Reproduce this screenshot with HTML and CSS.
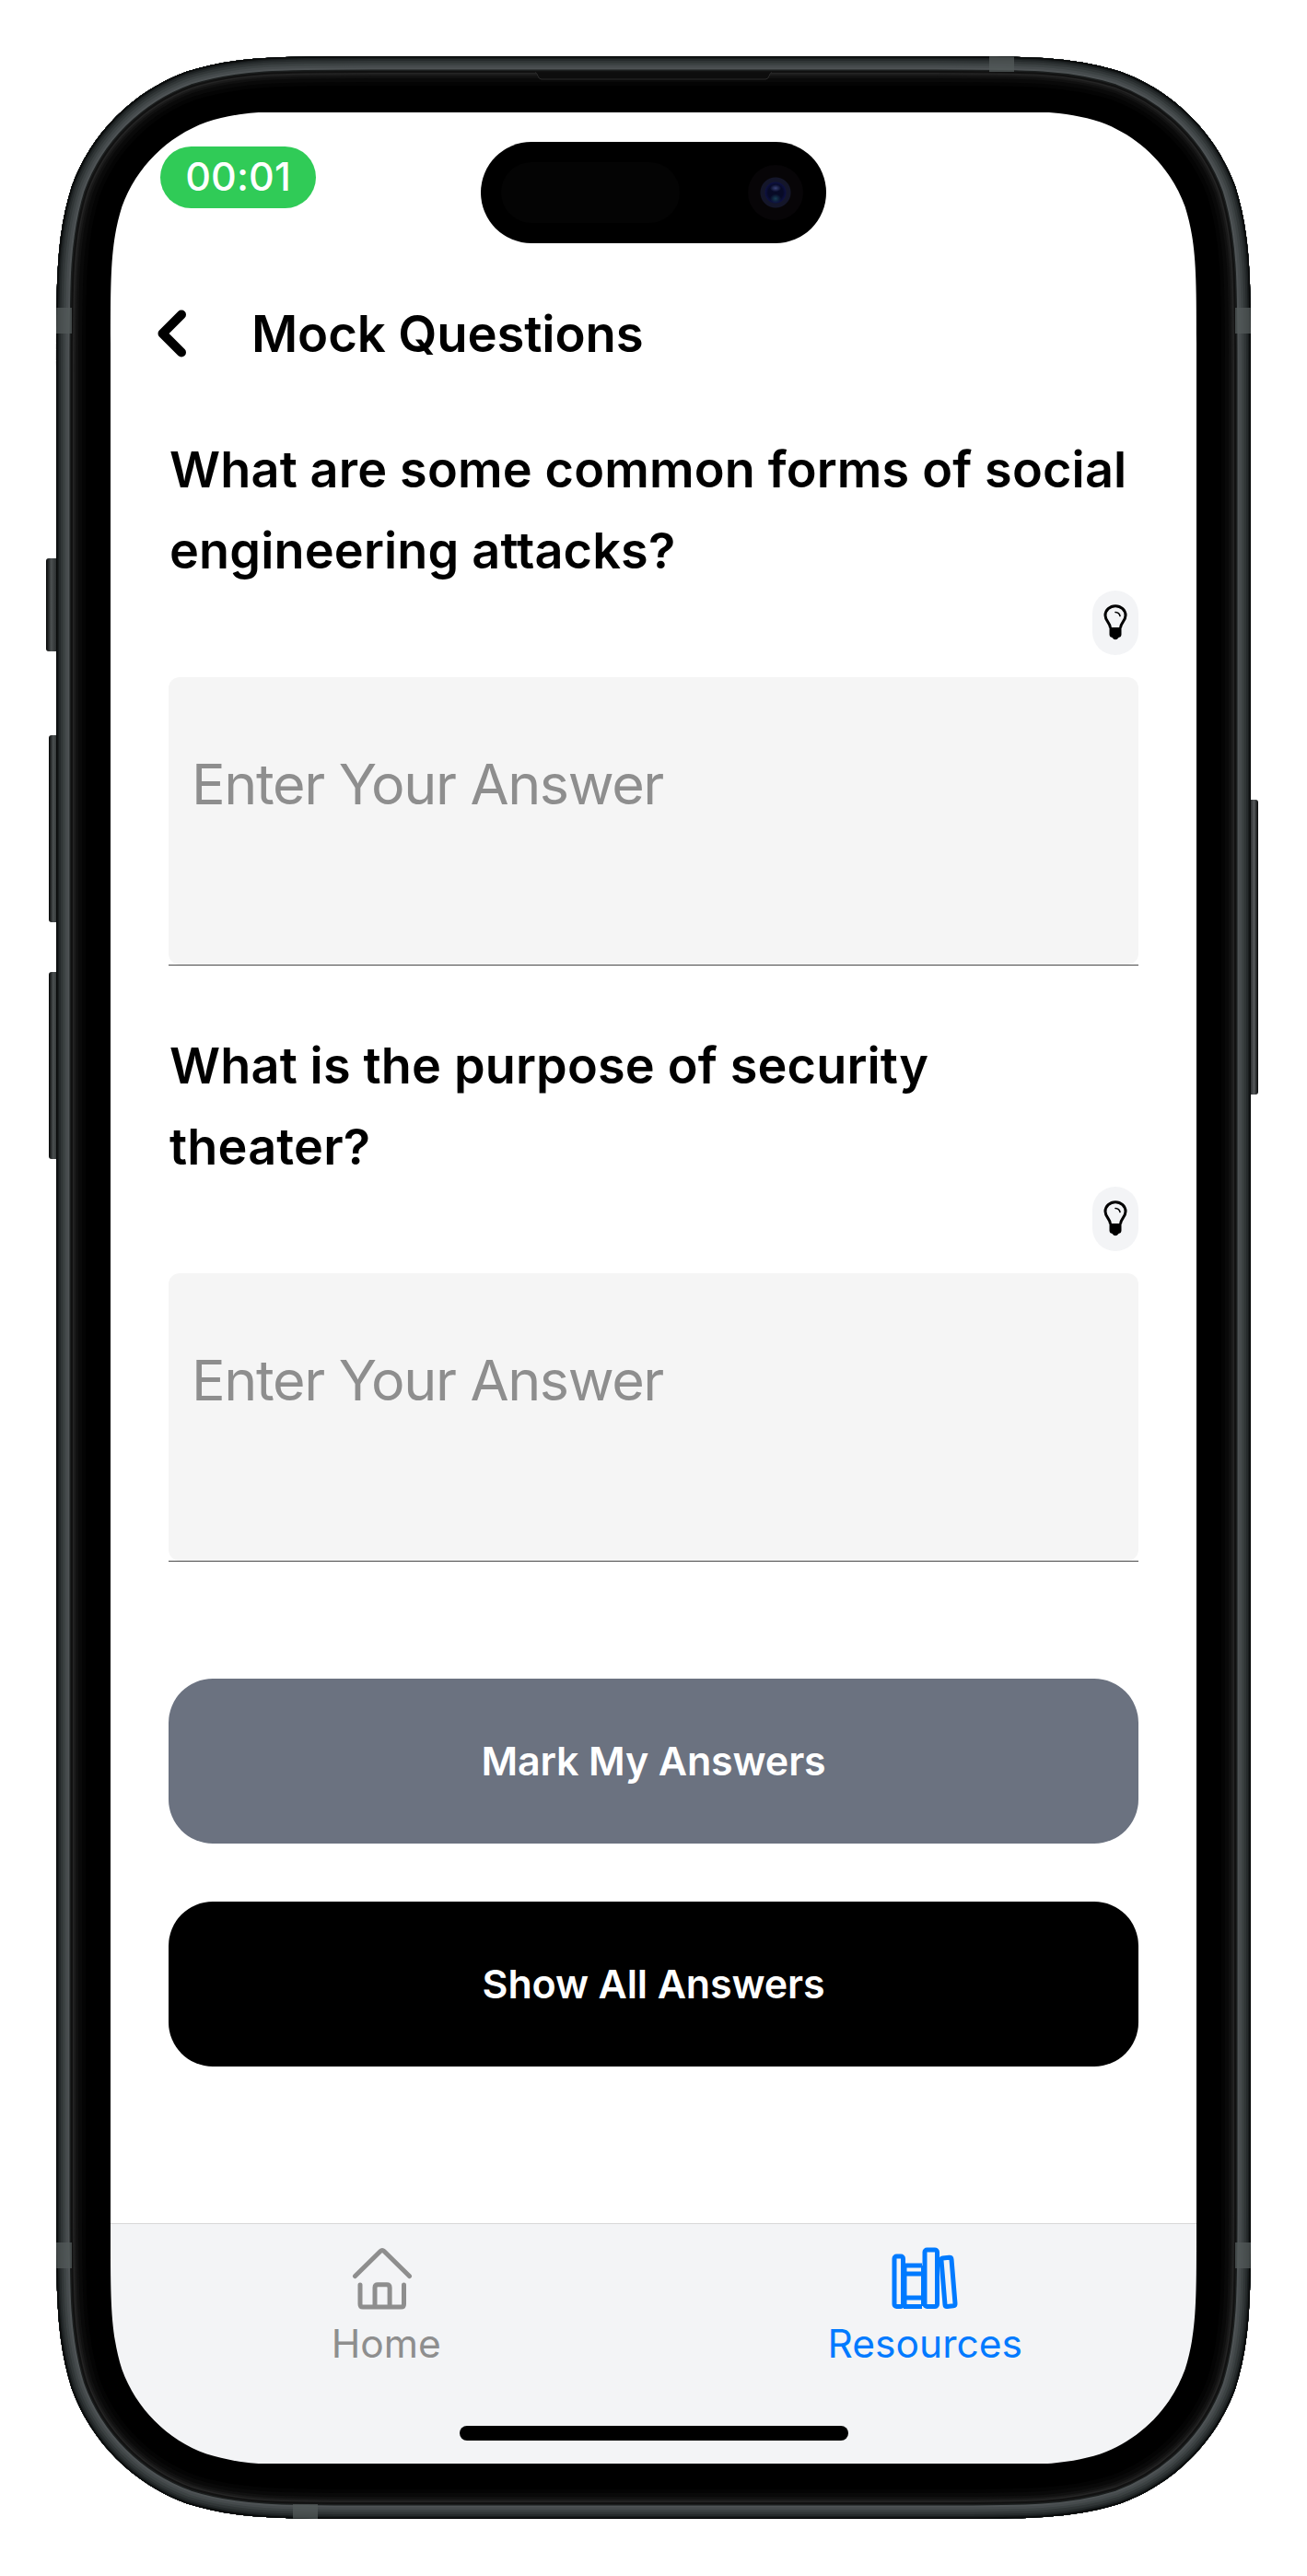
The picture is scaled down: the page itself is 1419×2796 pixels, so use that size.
FILE: index.html
```html
<!DOCTYPE html>
<html lang="en">
<head>
<meta charset="utf-8">
<title>Mock Questions</title>
<link rel="stylesheet" href="styles.css">
</head>
<body>
<main class="stage">
  <div class="screen">
    <div class="status"><span class="timer">00:01</span></div>
    <header class="header">
      <svg class="back" viewBox="0 0 32 52" fill="none" stroke="#000" stroke-width="10" stroke-linecap="round" stroke-linejoin="round"><path d="M26 5.500 5.500 26 26 46.500"/></svg>
      <h1 class="title">Mock Questions</h1>
    </header>
    <section class="question">
      <h2 class="prompt">What are some common forms of social<br>engineering attacks?</h2>
      <button class="hint" aria-label="Hint"><svg viewBox="0 0 26 40"><path d="M7.500 25.500C7.500 20 2 18 2 12a11 10.300 0 0 1 22 0c0 6-5.500 8-5.500 13.500" fill="none" stroke="#000" stroke-width="3"/><path d="M6.500 25h13v7.500q0 3-3 3.500-1.500 2.300-3.500 2.300T9.500 36q-3-.5-3-3.500z"/><path d="M13 8.500q4.200.2 5 4" fill="none" stroke="#000" stroke-width="1.600" stroke-linecap="round"/></svg></button>
      <div class="answer"><div class="field">Enter Your Answer</div></div>
    </section>
    <section class="question">
      <h2 class="prompt">What is the purpose of security<br>theater?</h2>
      <button class="hint" aria-label="Hint"><svg viewBox="0 0 26 40"><path d="M7.500 25.500C7.500 20 2 18 2 12a11 10.300 0 0 1 22 0c0 6-5.500 8-5.500 13.500" fill="none" stroke="#000" stroke-width="3"/><path d="M6.500 25h13v7.500q0 3-3 3.500-1.500 2.300-3.500 2.300T9.500 36q-3-.5-3-3.500z"/><path d="M13 8.500q4.200.2 5 4" fill="none" stroke="#000" stroke-width="1.600" stroke-linecap="round"/></svg></button>
      <div class="answer"><div class="field">Enter Your Answer</div></div>
    </section>
    <div class="actions">
      <button class="action mark">Mark My Answers</button>
      <button class="action show">Show All Answers</button>
    </div>
    <nav class="tabs">
      <a class="tab home">
        <svg class="icon" viewBox="0 0 66 68" fill="none" stroke="currentColor" stroke-width="5" stroke-linecap="round" stroke-linejoin="round"><path d="M3.500 31.500 31 4.500Q33 2.500 35 4.500L62.500 31.500M9 41v21q0 3 3 3h41.500q3 0 3-3V41M25 64V44q0-3.300 3.300-3.300h9.500q3.300 0 3.300 3.300v20"/></svg>
        <span>Home</span>
      </a>
      <a class="tab resources">
        <svg class="icon books" viewBox="0 0 72 68" fill="none" stroke="currentColor" stroke-width="5" stroke-linejoin="round"><rect x="3" y="10" width="9.500" height="54.500" rx="2.500"/><path d="M13 20h20M13 29h20M13 55h20M13 64.500h20"/><path d="M14.500 20v44M34 20v44" stroke-width="4"/><rect x="36" y="3" width="13.500" height="61.500" rx="2.500"/><path d="M55.500 12l7-.7q2.300-.2 2.500 2l4 48q.2 2.300-2 2.500l-6.500.6q-2.300.2-2.500-2l-4-48q-.2-2.200 1.500-2.400z"/></svg>
        <span>Resources</span>
      </a>
    </nav>
    <div class="indicator"></div>
    <div class="island"><i class="sensor"></i><i class="lens"></i></div>
  </div>
  <svg class="frame" viewBox="0 0 1419 2796">
    <defs>
      <path id="outline" d="M403.500 61h612c98.600 0 147.900 0 201 16.800c57.900 21.100 103.600 66.700 124.700 124.700c16.800 53.100 16.800 102.400 16.800 201v1988c0 98.600 0 147.900-16.800 201c-21.100 57.900-66.700 103.600-124.700 124.700c-53.100 16.800-102.400 16.800-201 16.800h-612c-98.600 0-147.900 0-201-16.800c-57.900-21.100-103.600-66.700-124.700-124.700c-16.800-53.100-16.800-102.400-16.800-201v-1988c0-98.600 0-147.900 16.800-201c21.100-57.900 66.700-103.600 124.700-124.700c53.100-16.800 102.400-16.800 201-16.800z"/>
      <clipPath id="body"><use href="#outline"/></clipPath>
      <linearGradient id="left-key"><stop offset="0" stop-color="#050606"/><stop offset=".4" stop-color="#4b5051"/><stop offset="1" stop-color="#1c1f20"/></linearGradient>
      <linearGradient id="right-key"><stop offset="0" stop-color="#101213"/><stop offset=".6" stop-color="#55585a"/><stop offset="1" stop-color="#050606"/></linearGradient>
    </defs>
    <g fill="url(#left-key)">
      <rect x="50" y="606" width="14" height="101" rx="3"/>
      <rect x="53" y="798" width="12" height="203" rx="3"/>
      <rect x="53" y="1055" width="12" height="203" rx="3"/>
    </g>
    <rect x="1355" y="868" width="11" height="320" rx="3" fill="url(#right-key)"/>
    <path fill-rule="evenodd" d="M403.500 61h612c98.600 0 147.900 0 201 16.800c57.900 21.100 103.600 66.700 124.700 124.700c16.800 53.100 16.800 102.400 16.800 201v1988c0 98.600 0 147.900-16.800 201c-21.100 57.900-66.700 103.600-124.700 124.700c-53.100 16.800-102.400 16.800-201 16.800h-612c-98.600 0-147.900 0-201-16.800c-57.900-21.100-103.600-66.700-124.700-124.700c-16.800-53.100-16.800-102.400-16.800-201v-1988c0-98.600 0-147.900 16.800-201c21.100-57.900 66.700-103.600 124.700-124.700c53.100-16.800 102.400-16.800 201-16.800zM372.200 120h674.600c72.600 0 108.900 0 148 12.400c42.700 15.500 76.300 49.200 91.800 91.800c12.400 39.100 12.400 75.400 12.400 148v2051.600c0 72.600 0 108.900-12.400 148c-15.500 42.700-49.200 76.300-91.800 91.800c-39.100 12.400-75.400 12.400-148 12.400h-674.600c-72.600 0-108.900 0-148-12.400c-42.700-15.500-76.300-49.200-91.800-91.800c-12.400-39.100-12.400-75.400-12.400-148v-2051.600c0-72.600 0-108.900 12.400-148c15.500-42.700 49.200-76.300 91.800-91.800c39.100-12.400 75.400-12.400 148-12.400z"/>
    <path d="M270 119h880v3H270zM270 2674h880v3H270z"/>
    <g clip-path="url(#body)" fill="none">
      <use href="#outline" stroke="#040404" stroke-width="64"/>
      <use href="#outline" stroke="#090909" stroke-width="56"/>
      <use href="#outline" stroke="#101010" stroke-width="48"/>
      <use href="#outline" stroke="#191919" stroke-width="43"/>
      <use href="#outline" stroke="#242424" stroke-width="39"/>
      <use href="#outline" stroke="#111" stroke-width="36"/>
      <use href="#outline" stroke="#1b1e1e" stroke-width="32"/>
      <use href="#outline" stroke="#4e5355" stroke-width="29"/>
      <use href="#outline" stroke="#464b4d" stroke-width="25"/>
      <use href="#outline" stroke="#3c4243" stroke-width="20"/>
      <use href="#outline" stroke="#313637" stroke-width="15"/>
      <use href="#outline" stroke="#252a2b" stroke-width="10"/>
      <use href="#outline" stroke="#191d1e" stroke-width="6"/>
      <use href="#outline" stroke="#090b0b" stroke-width="3"/>
      <path fill="#535959" opacity=".75" d="M61 334h17v28H61zM1341 334h17v28h-17zM1074 61h27v17h-27zM318 2718h27v16h-27zM61 2434h17v28H61zM1341 2434h17v28h-17z"/>
    </g>
    <path d="M581 78.500q2 .5 3 4 1 3.500 4 3.500h243q3 0 4-3.500t3-4" fill="#0d0d0d" stroke="#2b2b2b"/>
  </svg>
</main>
</body>
</html>
```

FILE: styles.css
```css
* { box-sizing: border-box; }

body {
  margin: 0;
  background: #fff;
  font-family: Inter, "Liberation Sans", sans-serif;
  color: #000;
}

button { border: 0; padding: 0; font: inherit; color: inherit; }

.stage {
  position: relative;
  width: 1419px;
  height: 2796px;
  padding: 120px;
}

.frame {
  position: absolute;
  inset: 0;
  width: 1419px;
  height: 2796px;
  pointer-events: none;
}

.screen {
  position: relative;
  display: flex;
  flex-direction: column;
  width: 1179px;
  height: 2556px;
  border-radius: 165px;
  overflow: hidden;
  background: #fff;
}

.status { height: 173px; padding: 39px 0 0 54px; }

.timer {
  display: flex;
  align-items: center;
  justify-content: center;
  width: 169px;
  height: 67px;
  padding-bottom: 3px;
  border-radius: 34px;
  background: #30cb57;
  color: #fff;
  font-size: 43px;
  font-weight: 500;
  letter-spacing: 0.1px;
}

.header {
  display: flex;
  align-items: center;
  height: 138px;
  padding-left: 51px;
}

.back { width: 32px; height: 52px; }

.title {
  margin: 0 0 0 70px;
  font-size: 54.500px;
  font-weight: 600;
  letter-spacing: -0.15px;
  line-height: 88px;
  white-space: nowrap;
}

.question {
  display: flex;
  flex-direction: column;
  height: 647px;
  padding: 35px 63px 0;
}

.prompt {
  margin: 0;
  padding-left: 1px;
  font-size: 54px;
  font-weight: 600;
  letter-spacing: 0.16px;
  line-height: 88px;
  white-space: nowrap;
}

.hint {
  display: flex;
  align-items: center;
  justify-content: center;
  align-self: flex-end;
  flex: none;
  width: 50px;
  height: 70px;
  margin-top: -1px;
  border-radius: 25px;
  background: #f3f4f6;
}

.hint svg { width: 26px; height: 40px; }

.answer {
  flex: none;
  margin-top: 24px;
  border-bottom: 1px solid #4a4a4a;
}

.field {
  height: 312px;
  padding: 78px 25px 0;
  border-radius: 12px;
  background: #f5f5f5;
  color: #8e8e8e;
  font-size: 61px;
  letter-spacing: -1.35px;
  line-height: 76px;
}

.actions {
  display: flex;
  flex-direction: column;
  gap: 63px;
  padding: 97px 63px 0;
}

.action {
  height: 179px;
  padding-bottom: 2px;
  border-radius: 48px;
  color: #fff;
  font-size: 43px;
  font-weight: 600;
  letter-spacing: -0.15px;
}

.mark { background: #6b7280; }
.show { background: #000; }

.tabs {
  display: grid;
  grid-template-columns: 1fr 1fr;
  height: 263px;
  margin-top: auto;
  padding-top: 25px;
  border-top: 1px solid #d8d8d8;
  background: #f3f4f6;
}

.tab {
  display: flex;
  flex-direction: column;
  align-items: center;
  font-size: 42.500px;
  letter-spacing: 0;
  line-height: 52px;
}

.icon { width: 66px; height: 68px; margin-bottom: 11px; }
.books { width: 72px; }
.home { color: #8e8e8e; }
.home span { margin-left: 9px; }
.resources { color: #007aff; }

.indicator {
  position: absolute;
  left: 379px;
  top: 2513px;
  width: 422px;
  height: 16px;
  border-radius: 8px;
  background: #000;
}

.island {
  position: absolute;
  left: 402px;
  top: 34px;
  display: flex;
  align-items: center;
  justify-content: space-between;
  width: 375px;
  height: 110px;
  padding: 0 25px 0 22px;
  border-radius: 55px;
  background: #000;
}

.sensor { width: 194px; height: 66px; border-radius: 33px; background: #040404; }

.lens {
  width: 60px;
  height: 60px;
  border-radius: 50%;
  background:
    radial-gradient(ellipse 6px 4px at 50% 42%, #3a4378, transparent),
    radial-gradient(ellipse 6px 5px at 50% 61%, #173f55, transparent),
    radial-gradient(circle, #070a26 8px, #0d1040 11px, #14162a 12px, #14162a 16px, #070507 17px);
}
```
